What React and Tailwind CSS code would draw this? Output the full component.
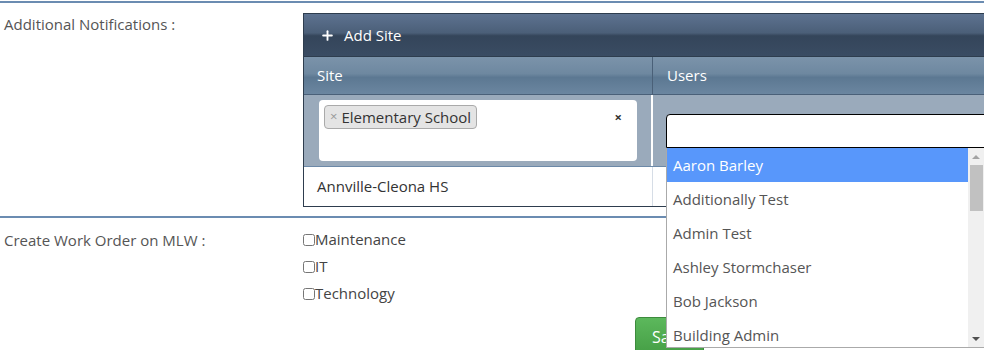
import { Plus } from 'lucide-react';

const users = [
  'Aaron Barley',
  'Additionally Test',
  'Admin Test',
  'Ashley Stormchaser',
  'Bob Jackson',
  'Building Admin',
];

export default function App() {
  return (
    <div className="w-[984px] h-[350px] overflow-hidden bg-white font-['Open_Sans',sans-serif] text-[15px] text-[#555]">
      <div className="mt-px h-[2px] bg-[#6b8cb1]" />

      {/* additional notifications */}
      <div className="flex pt-[10px]">
        <div className="w-[303px] shrink-0 pl-[4px] pt-0">Additional Notifications :</div>
        <div className="w-[760px] shrink-0 border border-[#2e3d4e]">
          <div className="h-[43px] flex items-center pl-[16px] gap-[9px] text-white text-[15px] bg-[linear-gradient(to_bottom,#5d7290_0%,#4b5f78_45%,#34455a_52%,#3a4c63_100%)] border-b border-[#2e3d4e]">
            <Plus size={15} strokeWidth={3} />
            <span>Add Site</span>
          </div>
          <div className="flex h-[38px] text-white text-[15px] bg-[linear-gradient(to_bottom,#7b93aa_0%,#6e88a0_45%,#5c7892_55%,#6b86a0_100%)] border-b border-[#4a6078]">
            <div className="w-[349px] shrink-0 flex items-center pl-[13px] border-r border-[#4a6078]">Site</div>
            <div className="flex-1 flex items-center pl-[14px]">Users</div>
          </div>
          <div className="flex h-[72px] bg-[#9aaabb] border-b border-[#6c89a8]">
            <div className="w-[349px] shrink-0 pl-[15px] pr-[14px] pt-[5px] border-r-2 border-white">
              <div className="h-[61px] bg-white rounded-[4px] flex items-start justify-between pl-[5px] pr-[15px] pt-[5px]">
                <span className="h-[24px] flex items-center gap-[4px] px-[5px] rounded-[4px] bg-[#e4e4e4] border border-[#aaa] text-[#333] text-[15px]">
                  <span className="text-[#999] text-[13px]">×</span>
                  Elementary School
                </span>
                <span className="mt-[3px] text-[#333] font-bold text-[13px]">×</span>
              </div>
            </div>
            <div className="flex-1 pl-[13px] pt-[19px] relative">
              <div className="h-[34px] bg-white border border-black rounded-tl-[4px]" />
              <div className="absolute left-[13px] top-[53px] w-[319px] h-[200px] bg-white border border-[#aaa] border-t-0 flex z-10">
                <div className="flex-1">
                  {users.map((u, i) => (
                    <div
                      key={u}
                      className={`h-[34px] flex items-center pl-[6px] text-[15px] ${i === 0 ? 'bg-[#5897fb] text-white' : 'text-[#555]'}`}
                    >
                      {u}
                    </div>
                  ))}
                </div>
                <div className="w-[16px] bg-[#f0f0f0] flex flex-col items-center">
                  <div className="h-[17px] flex items-center">
                    <div className="w-0 h-0 border-l-[4px] border-r-[4px] border-b-[4px] border-l-transparent border-r-transparent border-b-[#a3a3a3]" />
                  </div>
                  <div className="w-[13px] h-[46px] bg-[#c1c1c1]" />
                  <div className="flex-1" />
                  <div className="h-[17px] flex items-center">
                    <div className="w-0 h-0 border-l-[4px] border-r-[4px] border-t-[4px] border-l-transparent border-r-transparent border-t-[#505050]" />
                  </div>
                </div>
              </div>
            </div>
          </div>
          <div className="flex h-[39px] bg-white">
            <div className="w-[349px] shrink-0 flex items-center pl-[13px] text-[#333] border-r border-[#d6dde6]">
              Annville-Cleona HS
            </div>
            <div className="flex-1" />
          </div>
        </div>
      </div>

      <div className="mt-[9px] h-[2px] bg-[#6b8cb1]" />

      {/* work order */}
      <div className="flex pt-[11px]">
        <div className="w-[303px] shrink-0 pl-[4px]">Create Work Order on MLW :</div>
        <div className="flex flex-col gap-[6px] text-[#444]">
          {['Maintenance', 'IT', 'Technology'].map((t) => (
            <label key={t} className="flex items-center h-[21px]">
              <input type="checkbox" className="w-[12px] h-[12px] m-0" />
              {t}
            </label>
          ))}
        </div>
      </div>

      <div className="flex pl-[635px] pt-[13px]">
        <button className="h-[40px] px-[16px] rounded-[4px] text-white text-[16px] bg-[linear-gradient(to_bottom,#5cb85c,#449d44)] border border-[#3d8b3d]">
          Save
        </button>
      </div>
    </div>
  );
}
